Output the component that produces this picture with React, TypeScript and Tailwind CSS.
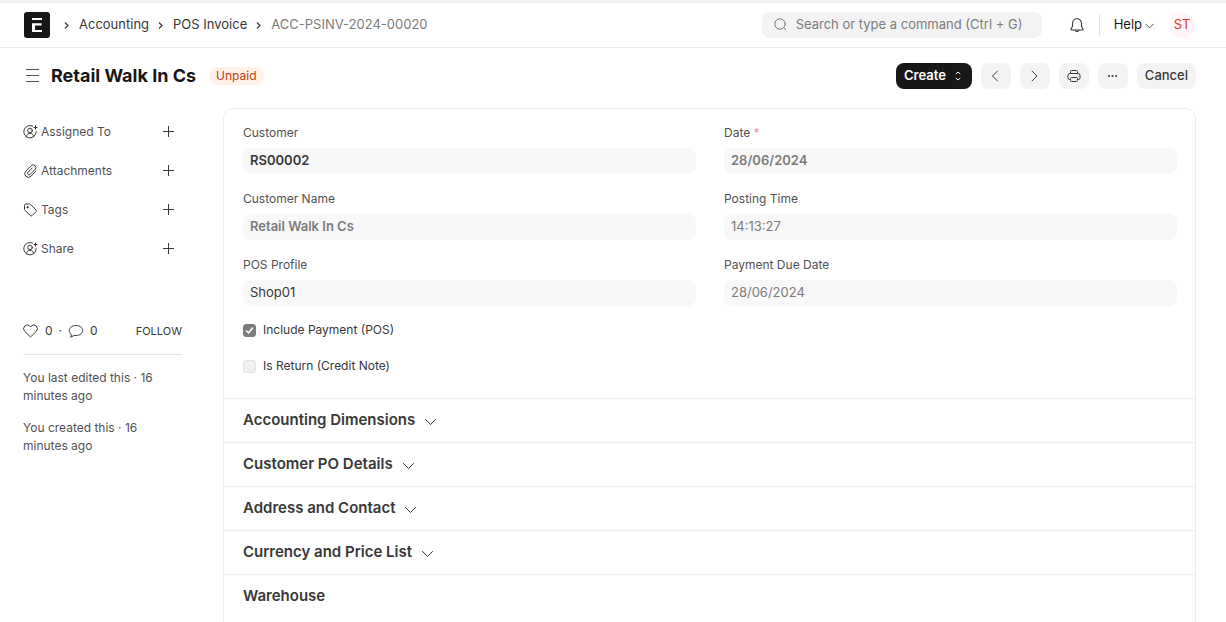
import React from 'react';

type IconProps = { className?: string };

function AppLogo() {
  return (
    <svg className="w-[26px] h-[26px]" viewBox="0 0 26 26" fill="none">
      <rect width="26" height="26" rx="3" fill="#171717" />
      <path d="M8 6h10v2H8zM8 11.3h9.5v2.2H11V18h7v2H8z" fill="#fff" />
    </svg>
  );
}

function ChevronRight({ className }: IconProps) {
  return (
    <svg className={className} viewBox="0 0 16 16" fill="none" stroke="currentColor" strokeLinecap="round" strokeLinejoin="round">
      <path d="m5 13 5-5-5-5" />
    </svg>
  );
}

function ChevronLeft({ className }: IconProps) {
  return (
    <svg className={className} viewBox="0 0 16 16" fill="none" stroke="currentColor" strokeLinecap="round" strokeLinejoin="round">
      <path d="m9.5 3-5 5 5 5" />
    </svg>
  );
}

function ChevronDown({ className }: IconProps) {
  return (
    <svg className={className} viewBox="0 0 16 16" fill="none" stroke="currentColor" strokeLinecap="round" strokeLinejoin="round">
      <path d="m2.500 5.500 5 5 5-5" />
    </svg>
  );
}

function Crumb() {
  return (
    <svg className="w-2 h-2 text-[#383838]" viewBox="0 0 8 8" fill="none" stroke="currentColor" strokeWidth="1.2">
      <path d="m2 1.5 3 3-3 3" />
    </svg>
  );
}

function SearchIcon() {
  return (
    <svg className="w-4 h-4 shrink-0 text-[#7c7c7c]" viewBox="0 0 16 16" fill="none" stroke="currentColor" strokeLinecap="round">
      <circle cx="8" cy="7" r="5.2" />
      <path d="m11.8 10.8 2 2" />
    </svg>
  );
}

function BellIcon() {
  return (
    <svg className="w-4 h-4 text-[#383838]" viewBox="0 0 16 16" fill="none" stroke="currentColor" strokeWidth="1.1" strokeLinejoin="round">
      <path d="M8 1.7c-2.7 0-4.5 2-4.5 4.6v3L2 12c-.3.6 0 1 .6 1h10.800c.6 0 .9-.4.6-1l-1.500-2.700v-3C12.500 3.700 10.700 1.700 8 1.700Z" />
      <path d="M6.2 13c.2 1 .9 1.600 1.800 1.600s1.600-.6 1.800-1.600" />
    </svg>
  );
}

function MenuIcon() {
  return (
    <svg className="w-4 h-4 text-[#525252]" viewBox="0 0 16 16" fill="none" stroke="currentColor">
      <path d="M2 1.5h13M2 7.5h13M2 13.5h13" />
    </svg>
  );
}

function SelectIcon() {
  return (
    <svg className="w-3 h-3" viewBox="0 0 12 12" fill="none" stroke="currentColor" strokeLinecap="round" strokeLinejoin="round">
      <path d="m4 3.8 2-1.800 2 1.800M4 8.200 6 10l2-1.800" />
    </svg>
  );
}

function PrinterIcon() {
  return (
    <svg className="w-4 h-4" viewBox="0 0 16 16" fill="none" stroke="currentColor" strokeLinejoin="round">
      <path d="M4.500 5.500v-2a1 1 0 0 1 1-1h5a1 1 0 0 1 1 1v2" />
      <path d="M4.500 11.500h-1A1.500 1.500 0 0 1 2 10V7.500a2 2 0 0 1 2-2h8a2 2 0 0 1 2 2V10a1.500 1.500 0 0 1-1.500 1.500h-1" />
      <rect x="4.5" y="9.5" width="7" height="4" rx="1" />
    </svg>
  );
}

function DotsIcon() {
  return (
    <svg className="w-4 h-4" viewBox="0 0 16 16" fill="currentColor">
      <circle cx="4" cy="8" r="1" />
      <circle cx="7.5" cy="8" r="1" />
      <circle cx="11" cy="8" r="1" />
    </svg>
  );
}

function AssignIcon({ className }: IconProps) {
  return (
    <svg className={className} viewBox="0 0 16 16" fill="none" stroke="currentColor" strokeLinecap="round">
      <path d="M9.500 2A6.200 6.200 0 1 0 13.200 7.500" />
      <circle cx="7" cy="6.5" r="2.3" />
      <path d="M3.300 12.800C3.500 10.800 5 9.300 7 9.300s3.500 1.500 3.700 3.500M12.500 2v3M11 3.500h3" />
    </svg>
  );
}

function ClipIcon({ className }: IconProps) {
  return (
    <svg className={className} viewBox="0 0 16 16" fill="none" stroke="currentColor" strokeLinecap="round">
      <path d="m12.700 8.200-4.700 5a3.600 3.600 0 0 1-5.200 0 3.600 3.600 0 0 1 0-5l5.400-5.500a2.700 2.700 0 0 1 3.900 0 2.700 2.700 0 0 1 0 3.800L7 11.600a1.500 1.500 0 0 1-2.100-2.100l4-4.200" />
    </svg>
  );
}

function TagIcon({ className }: IconProps) {
  return (
    <svg className={className} viewBox="0 0 16 16" fill="none" stroke="currentColor" strokeLinejoin="round">
      <path d="M1.500 3.500a1.500 1.500 0 0 1 1.500-1.500h3.300c.4 0 .8.200 1.100.400l5.700 5.600a1.200 1.200 0 0 1 0 1.600l-4 4a1.200 1.200 0 0 1-1.600 0L1.900 8.200a1.500 1.500 0 0 1-.4-1.100Z" />
      <circle cx="4.6" cy="5.2" r="0.7" fill="currentColor" />
    </svg>
  );
}

function PlusIcon() {
  return (
    <svg className="w-4 h-4" viewBox="0 0 16 16" fill="none" stroke="currentColor">
      <path d="M8.500 2v11M3 7.500h11" />
    </svg>
  );
}

function HeartIcon() {
  return (
    <svg className="w-4 h-4" viewBox="0 0 16 16" fill="none" stroke="currentColor" strokeLinejoin="round">
      <path d="M7.500 14 1.700 8.300a3.700 3.700 0 0 1 0-5.200 3.600 3.600 0 0 1 5.100 0l.7.800.7-.8a3.600 3.600 0 0 1 5.100 0 3.700 3.700 0 0 1 0 5.200Z" />
    </svg>
  );
}

function CommentIcon() {
  return (
    <svg className="w-4 h-4" viewBox="0 0 16 16" fill="none" stroke="currentColor" strokeLinejoin="round">
      <path d="M8 2.500c-3.900 0-6.700 2.200-6.700 5 0 1.500.8 2.900 2 3.700L2.800 14.200l3.500-1.900c.6.100 1.100.200 1.700.200 3.900 0 6.700-2.200 6.700-5s-2.800-5-6.700-5Z" />
    </svg>
  );
}

const sidebarItems = [
  { label: 'Assigned To', icon: AssignIcon },
  { label: 'Attachments', icon: ClipIcon },
  { label: 'Tags', icon: TagIcon },
  { label: 'Share', icon: AssignIcon },
];

const leftFields = [
  { id: 'customer', label: 'Customer', value: 'RS00002', style: 'font-semibold text-[#383838]' },
  { id: 'customer_name', label: 'Customer Name', value: 'Retail Walk In Cs', style: 'font-semibold text-[#7c7c7c]' },
  { id: 'pos_profile', label: 'POS Profile', value: 'Shop01', style: 'text-[#383838]' },
];

const rightFields = [
  { id: 'posting_date', label: 'Date', value: '28/06/2024', style: 'font-semibold text-[#7c7c7c]', required: true },
  { id: 'posting_time', label: 'Posting Time', value: '14:13:27', style: 'text-[#7c7c7c]' },
  { id: 'due_date', label: 'Payment Due Date', value: '28/06/2024', style: 'text-[#7c7c7c]' },
];

const checks = [
  { id: 'is_pos', label: 'Include Payment (POS)', checked: true },
  { id: 'is_return', label: 'Is Return (Credit Note)', checked: false },
];

const sections = [
  { title: 'Accounting Dimensions', collapsible: true },
  { title: 'Customer PO Details', collapsible: true },
  { title: 'Address and Contact', collapsible: true },
  { title: 'Currency and Price List', collapsible: true },
  { title: 'Warehouse', collapsible: false },
];

type FieldProps = { id: string; label: string; value: string; style: string; required?: boolean };

function Field({ id, label, value, style, required }: FieldProps) {
  return (
    <div className="flex flex-col gap-1.5">
      <label htmlFor={id} className="text-[12px] leading-[18px] text-[#525252]">
        {label}
        {required && <span className="text-[#e79999]"> *</span>}
      </label>
      <input id={id} readOnly value={value} className={`h-[26px] w-full rounded-lg bg-[#f8f8f8] px-[7px] pb-0.5 text-[13px] outline-none ${style}`} />
    </div>
  );
}

function Navbar() {
  return (
    <header className="flex h-12 items-center border-t-[3px] border-b border-t-[#f0f0f0] border-b-[#ededed] pl-6 pr-[31px]">
      <a href="#" aria-label="Home"><AppLogo /></a>
      <nav className="ml-[13px] flex items-center gap-2 text-[13px] text-[#383838]">
        <Crumb />
        <a href="#">Accounting</a>
        <Crumb />
        <a href="#">POS Invoice</a>
        <Crumb />
        <span className="text-[#7c7c7c]">ACC-PSINV-2024-00020</span>
      </nav>
      <div className="ml-auto flex h-[26px] w-[280px] items-center gap-2 rounded-lg bg-[#f3f3f3] px-[10px]">
        <SearchIcon />
        <input
          type="text"
          aria-label="Search"
          placeholder="Search or type a command (Ctrl + G)"
          className="w-full bg-transparent text-[13px] outline-none placeholder:text-[#7c7c7c]"
        />
      </div>
      <button aria-label="Notifications" className="ml-[27px]"><BellIcon /></button>
      <div className="ml-3.5 h-[22px] w-px bg-[#e2e2e2]" />
      <button className="ml-3.5 flex items-center gap-0.5 text-[13px] text-[#171717]">
        Help <ChevronDown className="w-3 h-3 mt-0.5" />
      </button>
      <button className="ml-[13px] flex h-[26px] w-[26px] items-center justify-center rounded-full bg-[#fff5f5] text-[13px] text-[#e03636]">ST</button>
    </header>
  );
}

function PageHead() {
  const square = 'flex h-[26px] w-[30px] items-center justify-center rounded-lg bg-[#f3f3f3] text-[#383838]';
  return (
    <div className="flex h-14 items-center pl-6 pr-[30px]">
      <button aria-label="Toggle sidebar"><MenuIcon /></button>
      <h1 className="ml-[11px] text-lg font-bold text-[#171717]">Retail Walk In Cs</h1>
      <span className="ml-[13px] rounded-full bg-[#fff1e7] px-[7px] text-[12px] leading-[18px] text-[#bd3e0c]">Unpaid</span>
      <div className="ml-auto flex items-center gap-[9px]">
        <button className="flex h-[26px] items-center gap-1.5 rounded-lg bg-[#171717] px-2 text-[13px] font-semibold text-white">
          Create <SelectIcon />
        </button>
        <button aria-label="Previous" className={square}><ChevronLeft className="w-4 h-4" /></button>
        <button aria-label="Next" className={square}><ChevronRight className="w-4 h-4" /></button>
        <button aria-label="Print" className={square}><PrinterIcon /></button>
        <button aria-label="Menu" className={square}><DotsIcon /></button>
        <button className="h-[26px] rounded-lg bg-[#f3f3f3] px-2 text-[13px] font-medium text-[#383838]">Cancel</button>
      </div>
    </div>
  );
}

function Sidebar() {
  return (
    <aside className="w-[159px] shrink-0 text-[12px] leading-[18px] text-[#525252]">
      <ul className="flex flex-col gap-[21px] pt-[15px]">
        {sidebarItems.map((item) => (
          <li key={item.label} className="flex items-center gap-0.5 pr-1.5">
            <item.icon className="w-4 h-4 text-[#383838]" />
            <span>{item.label}</span>
            <button aria-label={`Add ${item.label}`} className="ml-auto text-[#383838]"><PlusIcon /></button>
          </li>
        ))}
      </ul>
      <div className="mt-16 flex items-center border-b border-[#e2e2e2] pb-[14px] text-[#383838]">
        <button aria-label="Like"><HeartIcon /></button>
        <span className="ml-1.5">0</span>
        <span className="mx-1.5">·</span>
        <CommentIcon />
        <span className="ml-1.5">0</span>
        <button className="ml-auto text-[11px]">FOLLOW</button>
      </div>
      <p className="mt-[14px] pr-6">You last edited this · 16 minutes ago</p>
      <p className="mt-[14px] pr-6">You created this · 16 minutes ago</p>
    </aside>
  );
}

export default function App() {
  return (
    <div className="h-screen overflow-hidden bg-white font-['Inter',sans-serif]">
      <Navbar />
      <PageHead />
      <div className="flex gap-[41px] pl-[23px] pr-[30px] pt-1">
        <Sidebar />
        <main className="min-h-screen flex-1 rounded-t-[10px] border border-[#ededed]">
          <div className="grid grid-cols-2 gap-7 pl-[19px] pr-[18px] pt-[15px]">
            <div className="flex flex-col gap-4">
              {leftFields.map((f) => <Field key={f.id} {...f} />)}
            </div>
            <div className="flex flex-col gap-4">
              {rightFields.map((f) => <Field key={f.id} {...f} />)}
            </div>
          </div>
          <div className="flex flex-col gap-[18px] px-[19px] pt-[15px] pb-[23px]">
            {checks.map((c) => (
              <label key={c.id} htmlFor={c.id} className="flex items-center gap-[7px] text-[12px] leading-[18px] text-[#383838]">
                <span className="grid">
                  <input
                    id={c.id}
                    type="checkbox"
                    defaultChecked={c.checked}
                    className="peer col-start-1 row-start-1 h-[13px] w-[13px] appearance-none rounded-[3px] border border-[#e2e2e2] bg-[#f0f0f0] checked:border-[#7c7c7c] checked:bg-[#7c7c7c]"
                  />
                  <svg className="col-start-1 row-start-1 hidden h-[13px] w-[13px] peer-checked:block" viewBox="0 0 13 13" fill="none" stroke="#fff" strokeWidth="1.5" strokeLinecap="round" strokeLinejoin="round">
                    <path d="m3.500 7 2 2 4-5" />
                  </svg>
                </span>
                {c.label}
              </label>
            ))}
          </div>
          {sections.map((s) => (
            <section key={s.title} className="border-t border-[#ededed] px-[19px]">
              <h2 className="flex h-[43px] items-center text-[15px] font-semibold text-[#383838]">
                {s.collapsible ? (
                  <button className="flex items-center gap-2">
                    {s.title} <ChevronDown className="w-4 h-4 mt-0.5" />
                  </button>
                ) : s.title}
              </h2>
            </section>
          ))}
        </main>
      </div>
    </div>
  );
}
